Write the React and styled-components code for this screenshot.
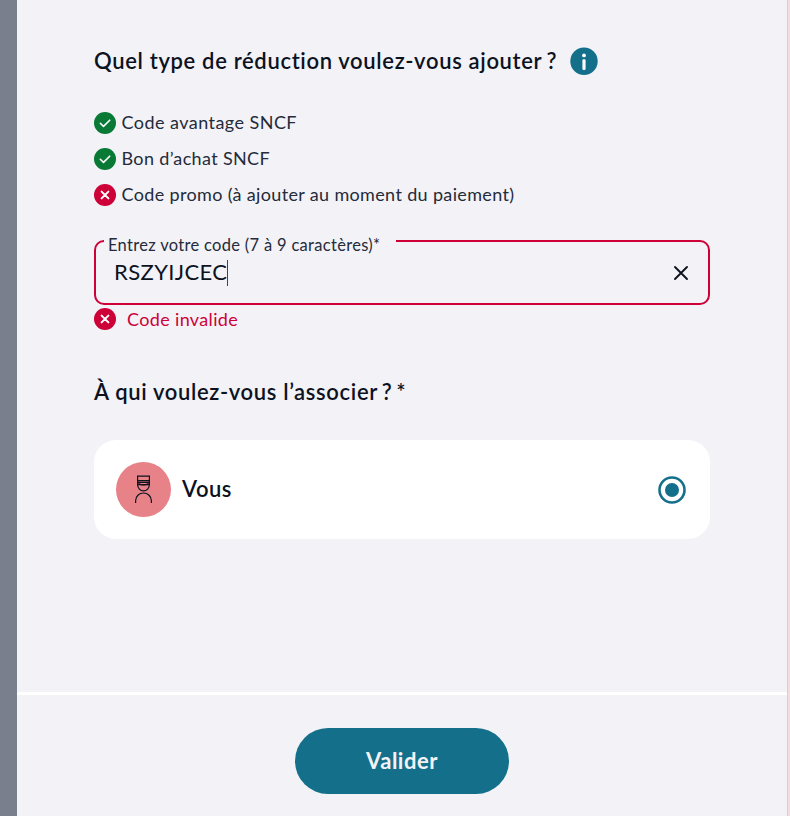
import React from "react";
import styled, { createGlobalStyle } from "styled-components";

const color = {
  ink: "#0c131f",
  text: "#242b3a",
  page: "#f3f2f7",
  teal: "#136f8a",
  red: "#cd0037",
  green: "#087a35",
};

const GlobalStyle = createGlobalStyle`
  * { box-sizing: border-box; }
  body {
    margin: 0;
    background: ${color.page};
    font-family: Lato, "Open Sans", sans-serif;
    font-variant-ligatures: none;
    overflow: hidden;
  }
`;

const Screen = styled.div`
  display: grid;
  grid-template-columns: 17px 1fr 3px;
  height: 816px;
`;
const Backdrop = styled.div`
  background: #797f8c;
`;
const Edge = styled.div`
  background: #f1dedd;
  border-left: 1px solid #d8cfd2;
`;
const Panel = styled.main`
  display: flex;
  flex-direction: column;
  background: ${color.page};
`;
const Content = styled.div`
  flex: 1;
  padding: 43px 77px 0;
`;
const Heading = styled.h2`
  display: flex;
  align-items: center;
  gap: 12.5px;
  height: 36px;
  margin: 0;
  color: ${color.ink};
  font-size: 22px;
  font-weight: 600;
  line-height: 36px;
  letter-spacing: 0.66px;
  white-space: nowrap;
`;
const Punctuation = styled.span`
  word-spacing: ${(p) => p.$tighten};
`;
const Conditions = styled.ul`
  list-style: none;
  margin: 26px 0 27px;
  padding: 0;
`;
const Condition = styled.li`
  display: flex;
  align-items: center;
  gap: 5.5px;
  height: 36px;
  color: ${color.text};
  font-size: 18px;
  letter-spacing: ${(p) => p.$tracking};
  white-space: nowrap;
`;
const ConditionText = styled.span`
  padding-bottom: 2px;
`;
const Field = styled.div`
  position: relative;
`;
const Outline = styled.fieldset`
  display: block;
  height: 65px;
  margin: 0;
  padding: 0 19px 0 8px;
  border: 2px solid ${color.red};
  border-radius: 10px;
`;
const Notch = styled.legend`
  width: 292px;
  height: 2px;
  padding: 0;
`;
const FieldLabel = styled.label`
  position: absolute;
  top: -5px;
  left: 14px;
  color: ${color.text};
  font-size: 16.5px;
  line-height: 20px;
  letter-spacing: 0.31px;
  white-space: nowrap;
`;
const FieldRow = styled.div`
  display: flex;
  align-items: center;
  justify-content: space-between;
  height: 61px;
  padding-left: 10px;
`;
const Value = styled.div`
  height: 26px;
  border-right: 1px solid ${color.red};
  color: ${color.ink};
  font-size: 22px;
  line-height: 24px;
  letter-spacing: 0.39px;
`;
const ClearButton = styled.button`
  display: flex;
  padding: 0;
  border: 0;
  background: none;
  color: ${color.ink};
`;
const ErrorLine = styled.div`
  display: flex;
  align-items: center;
  gap: 11px;
  height: 28px;
  margin-bottom: 41px;
  color: ${color.red};
  font-size: 18px;
  letter-spacing: 0.35px;
`;
const TravellerCard = styled.div`
  display: flex;
  align-items: center;
  height: 99px;
  margin-top: 30px;
  padding: 0 24.5px 0 22px;
  border-radius: 22px;
  background: #fff;
`;
const Avatar = styled.div`
  display: grid;
  place-items: center;
  width: 55px;
  height: 55px;
  border-radius: 50%;
  background: #e78289;
`;
const TravellerName = styled.span`
  flex: 1;
  margin-left: 11px;
  padding-bottom: 2px;
  color: ${color.ink};
  font-size: 22px;
  font-weight: 600;
  letter-spacing: 0.5px;
`;
const Footer = styled.footer`
  display: flex;
  justify-content: center;
  height: 124px;
  padding-top: 33px;
  border-top: 3px solid #fff;
`;
const SubmitButton = styled.button`
  width: 214px;
  height: 66px;
  padding: 0 0 2px;
  border: 0;
  border-radius: 33px;
  background: ${color.teal};
  color: ${color.page};
  font: 700 22px Lato, sans-serif;
  letter-spacing: 0.5px;
`;

function StatusIcon({ valid }) {
  return (
    <svg width="22" height="22" viewBox="0 0 22 22" fill="none">
      <circle cx="11" cy="11" r="11" fill={valid ? color.green : color.red} />
      {valid ? (
        <path d="M6.3 11.3l3.2 3.1 6.2-6.2" stroke="#fff" strokeWidth="1.6" strokeLinecap="round" strokeLinejoin="round" />
      ) : (
        <path d="M7.6 7.6l6.8 6.8M14.4 7.6l-6.8 6.8" stroke="#fff" strokeWidth="2" strokeLinecap="round" />
      )}
    </svg>
  );
}

function InfoIcon() {
  return (
    <svg width="28" height="28" viewBox="0 0 28 28">
      <circle cx="14" cy="14.3" r="13.7" fill={color.teal} />
      <circle cx="14" cy="8.4" r="1.9" fill="#fff" />
      <rect x="12.4" y="12.3" width="3.2" height="10.8" rx="1.3" fill="#fff" />
    </svg>
  );
}

function ClearIcon() {
  return (
    <svg width="16" height="16" viewBox="0 0 16 16" fill="none">
      <path d="M2 2l12 12M14 2L2 14" stroke="currentColor" strokeWidth="1.9" strokeLinecap="round" />
    </svg>
  );
}

function ConductorIcon() {
  return (
    <svg width="17" height="29" viewBox="0 0 17 29" fill="none" stroke={color.ink} strokeWidth="1.2">
      <path d="M2.6 1.1h11.8v8.5H2.6z" />
      <path d="M2.6 5.6h11.8M2.6 7.3h11.8M3.4 8.6q5.1 2.8 10.2 0" />
      <path d="M2.6 9.6a5.9 6.3 0 0 0 11.8 0" />
      <path d="M0.6 28v-2.2a7.9 7.8 0 0 1 15.8 0v2.2" />
    </svg>
  );
}

function RadioIcon() {
  return (
    <svg width="28" height="28" viewBox="0 0 28 28">
      <circle cx="14" cy="14" r="12.5" fill="none" stroke={color.teal} strokeWidth="2.6" />
      <circle cx="14" cy="14" r="7" fill={color.teal} />
    </svg>
  );
}

const conditions = [
  { text: "Code avantage SNCF", valid: true, tracking: "0.45px" },
  { text: "Bon d’achat SNCF", valid: true, tracking: "0.34px" },
  { text: "Code promo (à ajouter au moment du paiement)", valid: false, tracking: "0.35px" },
];

export default function App() {
  return (
    <>
      <GlobalStyle />
      <Screen>
        <Backdrop />
        <Panel>
          <Content>
            <Heading>
              <span>
                Quel type de réduction voulez-vous ajouter<Punctuation $tighten="-2px"> ?</Punctuation>
              </span>
              <InfoIcon />
            </Heading>
            <Conditions>
              {conditions.map((c) => (
                <Condition key={c.text} $tracking={c.tracking}>
                  <StatusIcon valid={c.valid} />
                  <ConditionText>{c.text}</ConditionText>
                </Condition>
              ))}
            </Conditions>
            <Field>
              <Outline>
                <Notch />
                <FieldRow>
                  <Value>RSZYIJCEC</Value>
                  <ClearButton aria-label="Effacer">
                    <ClearIcon />
                  </ClearButton>
                </FieldRow>
              </Outline>
              <FieldLabel>Entrez votre code (7 à 9 caractères)*</FieldLabel>
            </Field>
            <ErrorLine>
              <StatusIcon valid={false} />
              Code invalide
            </ErrorLine>
            <Heading>
              <span>
                À qui voulez-vous l’associer<Punctuation $tighten="-2.3px"> ? *</Punctuation>
              </span>
            </Heading>
            <TravellerCard>
              <Avatar>
                <ConductorIcon />
              </Avatar>
              <TravellerName>Vous</TravellerName>
              <RadioIcon />
            </TravellerCard>
          </Content>
          <Footer>
            <SubmitButton>Valider</SubmitButton>
          </Footer>
        </Panel>
        <Edge />
      </Screen>
    </>
  );
}
